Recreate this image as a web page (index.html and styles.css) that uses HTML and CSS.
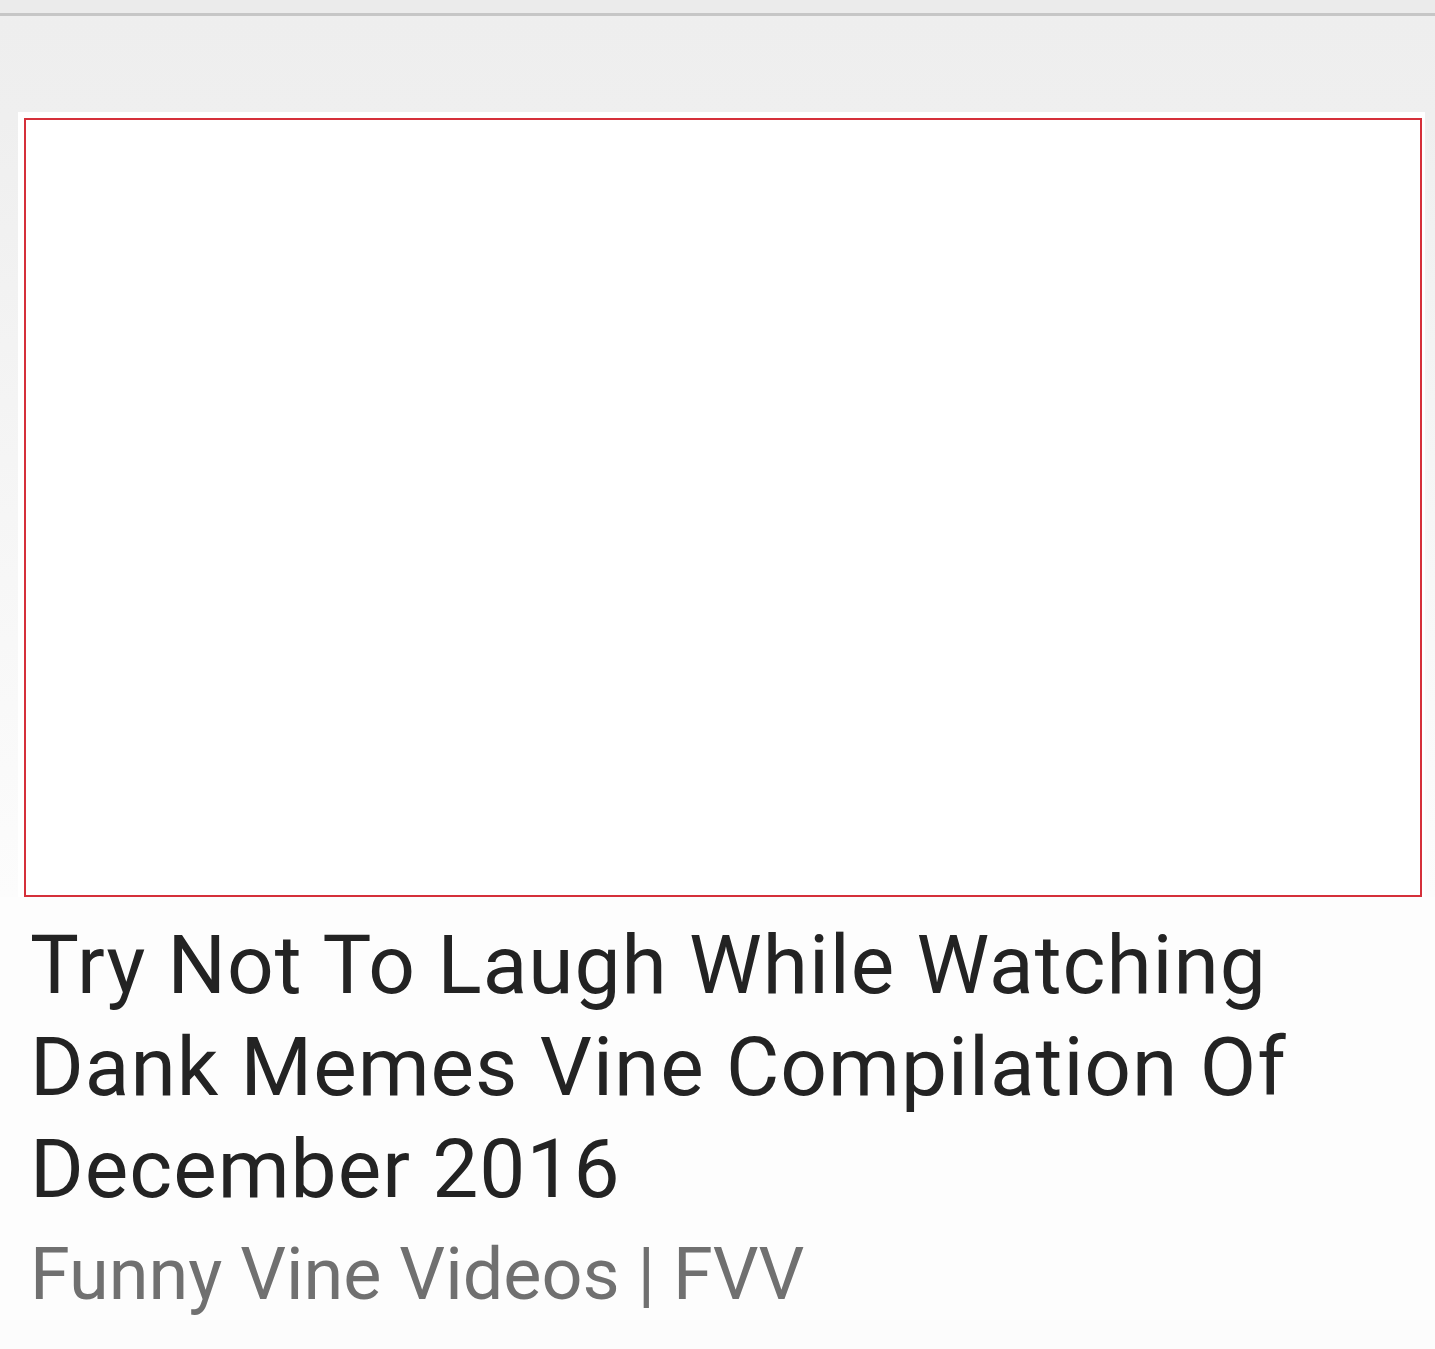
FILE: index.html
```html
<!DOCTYPE html>
<html lang="en">
<head>
<meta charset="utf-8">
<title>Video</title>
<link rel="stylesheet" href="styles.css">
</head>
<body>
<div class="topbar"></div>
<main class="page">
  <div class="card">
    <div class="thumb"></div>
  </div>
  <section class="info">
    <h1 class="title">Try Not To Laugh While Watching Dank Memes Vine Compilation Of December 2016</h1>
    <p class="channel">Funny Vine Videos | FVV</p>
  </section>
</main>
</body>
</html>
```

FILE: styles.css
```css
html, body {
  margin: 0;
  padding: 0;
}
body {
  background: #fcfcfc;
  font-family: Roboto, "Noto Sans", "Liberation Sans", sans-serif;
  width: 1435px;
  height: 1349px;
  overflow: hidden;
}
.topbar {
  height: 13px;
  background: #ebebeb;
  border-bottom: 3px solid #c6c6c6;
  box-shadow: 0 2px 2px rgba(0,0,0,0.08);
}
.page {
  background: linear-gradient(to bottom, #eeeeee 0px, #efefef 100px, #f6f6f6 500px, #fcfcfc 880px, #fcfcfc 100%);
  height: 1333px;
  padding-top: 96px;
  box-sizing: border-box;
}
.card {
  margin-left: 18px;
  width: 1407px;
  background: #ffffff;
  padding: 6px 3px 0 6px;
  box-sizing: border-box;
}
.thumb {
  height: 779px;
  border: 2px solid #d5303a;
  box-sizing: border-box;
  background: #ffffff;
}
.info {
  padding: 17px 0 0 30px;
  background: #fdfdfd;
}
.title {
  margin: 0;
  font-weight: 400;
  font-size: 82px;
  line-height: 102px;
  letter-spacing: 1px;
  color: #232323;
  width: 1380px;
}
.channel {
  margin: 10px 0 0 0;
  font-size: 72px;
  line-height: 90px;
  color: #707070;
}
```
